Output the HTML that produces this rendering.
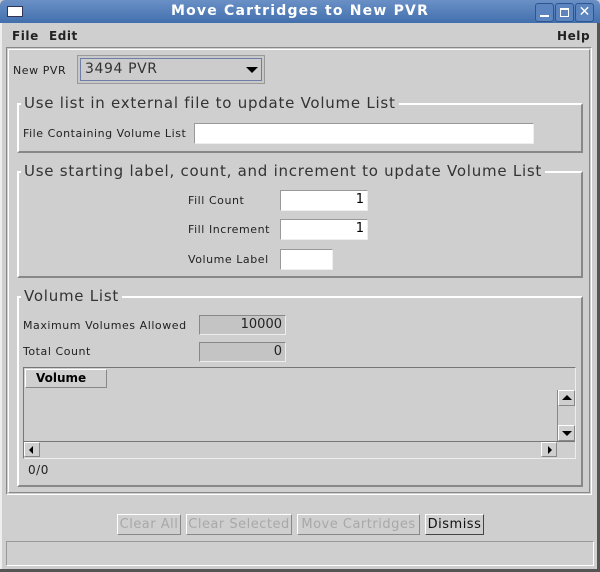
<!DOCTYPE html>
<html><head><style>
body{margin:0;width:600px;height:572px;background:#cfcfcf;font-family:"DejaVu Sans","Liberation Sans",sans-serif;position:relative;overflow:hidden}
.a{position:absolute}
.t{position:absolute;font-size:11px;color:#222;white-space:nowrap;letter-spacing:0.55px}
.grp{position:absolute;border-top:2px solid #fff;border-left:2px solid #fff;border-right:2px solid #888;border-bottom:2px solid #888}
.gt{position:absolute;font-size:15px;color:#333;background:#cfcfcf;padding:0 3px;white-space:nowrap;line-height:16px;letter-spacing:0.75px}
.tf{position:absolute;background:#fff;border-top:1px solid #999;border-left:1px solid #999;border-bottom:1px solid #eee;border-right:1px solid #eee;font-size:13px;text-align:right;box-sizing:border-box;padding-right:3px;line-height:18px}
.ro{position:absolute;background:#c4c4c4;border:1px solid #888;border-right-color:#eee;border-bottom-color:#eee;box-sizing:border-box;font-size:13px;text-align:right;padding-right:3px;line-height:17px;color:#222}
.btn{position:absolute;height:21px;border:1px solid #888;border-top-color:#fff;border-left-color:#fff;box-sizing:border-box;font-size:13px;color:#a8a8a8;text-align:center;line-height:19px;background:#cfcfcf;letter-spacing:0.5px;white-space:nowrap;overflow:hidden}
</style></head><body>
<div class="a" style="left:0;top:0;width:600px;height:23px;background:linear-gradient(#6a90c6,#4270ad);border-radius:5px 5px 0 0"></div>
<div class="a" style="left:7px;top:6px;width:14px;height:9px;background:#fff;border:1px solid #335"></div>
<div class="a" style="left:0;top:3px;width:600px;text-align:center;color:#fff;font-weight:bold;font-size:14px;letter-spacing:1.2px">Move Cartridges to New PVR</div>
<div class="a" style="left:535px;top:3px;width:17px;height:17px;border:1px solid #2d5590;border-radius:3px;background:#5c85bf"><div class="a" style="left:4px;top:11px;width:9px;height:2px;background:#fff"></div></div>
<div class="a" style="left:555px;top:3px;width:17px;height:17px;border:1px solid #2d5590;border-radius:3px;background:#5c85bf"><div class="a" style="left:4px;top:4px;width:7px;height:6px;border:1px solid #fff;border-top-width:2px"></div></div>
<div class="a" style="left:575px;top:3px;width:17px;height:17px;border:1px solid #2d5590;border-radius:3px;background:#5c85bf;color:#fff;font-weight:bold;font-size:14px;text-align:center;line-height:17px">✕</div>
<div class="a" style="left:0;top:23px;width:2px;height:549px;background:#eee"></div>
<div class="a" style="left:597px;top:23px;width:3px;height:549px;background:#555"></div>
<div class="a" style="left:0;top:569px;width:600px;height:3px;background:#555"></div>
<div class="t" style="left:12px;top:29px;font-weight:bold;font-size:12px">File</div>
<div class="t" style="left:49px;top:29px;font-weight:bold;font-size:12px">Edit</div>
<div class="t" style="left:557px;top:29px;font-weight:bold;font-size:12px">Help</div>
<div class="a" style="left:6px;top:47px;width:584px;height:446px;border:1px solid #888;border-right-color:#fff;border-bottom-color:#fff"></div>
<div class="a" style="left:8px;top:49px;width:580px;height:442px;border:1px solid #fff;border-right-color:#888;border-bottom-color:#888"></div>
<div class="t" style="left:13px;top:64px">New PVR</div>
<div class="a" style="left:77px;top:55px;width:188px;height:29px;border:1px solid #999;box-sizing:border-box;background:#c8c8c8"></div>
<div class="a" style="left:80px;top:58px;width:182px;height:23px;border:1px solid #6f7ea6;box-sizing:border-box;background:#ccc;font-size:14px;line-height:21px;padding-left:4px;color:#333;letter-spacing:0.6px">3494 PVR</div>
<div class="a" style="left:246px;top:67px;width:0;height:0;border-left:6px solid transparent;border-right:6px solid transparent;border-top:6px solid #000"></div>

<div class="grp" style="left:17px;top:103px;width:562px;height:46px"></div>
<div class="gt" style="left:21px;top:95px">Use list in external file to update Volume List</div>
<div class="t" style="left:23px;top:127px">File Containing Volume List</div>
<div class="tf" style="left:194px;top:123px;width:340px;height:21px"></div>

<div class="grp" style="left:17px;top:171px;width:562px;height:103px"></div>
<div class="gt" style="left:21px;top:163px">Use starting label, count, and increment to update Volume List</div>
<div class="t" style="left:188px;top:194px">Fill Count</div>
<div class="tf" style="left:280px;top:190px;width:88px;height:21px">1</div>
<div class="t" style="left:188px;top:223px">Fill Increment</div>
<div class="tf" style="left:280px;top:219px;width:88px;height:21px">1</div>
<div class="t" style="left:188px;top:253px">Volume Label</div>
<div class="tf" style="left:280px;top:249px;width:53px;height:21px"></div>

<div class="grp" style="left:17px;top:296px;width:562px;height:187px"></div>
<div class="gt" style="left:21px;top:288px">Volume List</div>
<div class="t" style="left:23px;top:319px">Maximum Volumes Allowed</div>
<div class="ro" style="left:199px;top:315px;width:87px;height:20px">10000</div>
<div class="t" style="left:23px;top:345px">Total Count</div>
<div class="ro" style="left:199px;top:342px;width:87px;height:20px">0</div>

<div class="a" style="left:23px;top:367px;width:553px;height:92px;border:1px solid #777;border-right-color:#eee;border-bottom-color:#eee;box-sizing:border-box"></div>
<div class="a" style="left:25px;top:369px;width:82px;height:19px;border:1px solid #888;border-top-color:#fff;border-left-color:#fff;box-sizing:border-box;font-size:12px;font-weight:bold;padding-left:10px;line-height:17px">Volume</div>
<div class="a" style="left:24px;top:441px;width:551px;height:1px;background:#777"></div>
<div class="a" style="left:24px;top:442px;width:16px;height:15px;border:1px solid #888;border-top-color:#fff;border-left-color:#fff;box-sizing:border-box"><div class="a" style="left:4px;top:3px;border-top:4px solid transparent;border-bottom:4px solid transparent;border-right:4px solid #000"></div></div>
<div class="a" style="left:541px;top:442px;width:16px;height:15px;border:1px solid #888;border-top-color:#fff;border-left-color:#fff;box-sizing:border-box"><div class="a" style="left:6px;top:3px;border-top:4px solid transparent;border-bottom:4px solid transparent;border-left:4px solid #000"></div></div>
<div class="a" style="left:557px;top:390px;width:18px;height:51px;border-left:1px solid #888"></div>
<div class="a" style="left:558px;top:390px;width:17px;height:16px;border:1px solid #888;border-top-color:#fff;border-left-color:#fff;box-sizing:border-box"><div class="a" style="left:3px;top:4px;border-left:5px solid transparent;border-right:5px solid transparent;border-bottom:5px solid #000"></div></div>
<div class="a" style="left:558px;top:425px;width:17px;height:16px;border:1px solid #888;border-top-color:#fff;border-left-color:#fff;box-sizing:border-box"><div class="a" style="left:3px;top:5px;border-left:5px solid transparent;border-right:5px solid transparent;border-top:5px solid #000"></div></div>
<div class="t" style="left:28px;top:463px;font-size:12px">0/0</div>

<div class="btn" style="left:117px;top:514px;width:64px">Clear All</div>
<div class="btn" style="left:186px;top:514px;width:106px">Clear Selected</div>
<div class="btn" style="left:297px;top:514px;width:123px">Move Cartridges</div>
<div class="btn" style="left:425px;top:514px;width:59px;color:#111;border-color:#444;border-top-color:#fff;border-left-color:#fff">Dismiss</div>

<div class="a" style="left:6px;top:541px;width:588px;height:25px;border:1px solid #999;border-right-color:#fff;border-bottom-color:#fff;box-sizing:border-box"></div>
</body></html>
